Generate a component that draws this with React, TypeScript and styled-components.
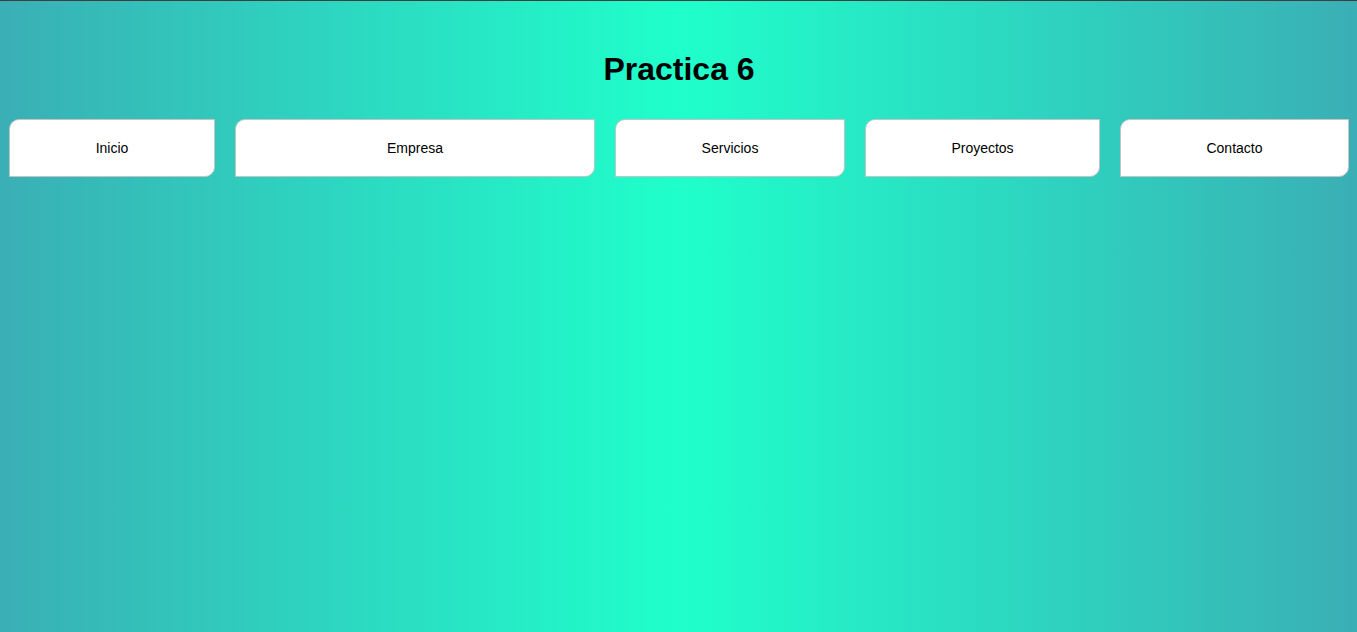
import React from 'react';
import styled, { createGlobalStyle } from 'styled-components';

const GlobalStyle = createGlobalStyle`
  html, body {
    margin: 0;
    padding: 0;
    height: 100%;
  }
  body {
    font-family: "Liberation Sans", Arial, sans-serif;
    border-top: 1px solid #3f3f3f;
    box-sizing: border-box;
    background: linear-gradient(to right, #3aafb5 0%, #1fffcb 50%, #3aafb5 100%);
    min-height: 632px;
  }
`;

const Page = styled.div`
  padding: 0 8px 0 9px;
`;

const Title = styled.h1`
  margin: 50px 0 31px;
  font-size: 32px;
  font-weight: bold;
  text-align: center;
  color: #000;
`;

const Nav = styled.nav`
  display: flex;
  gap: 20px;
`;

const NavButton = styled.a<{ $width: number }>`
  flex: 0 0 ${({ $width }) => $width}px;
  height: 58px;
  box-sizing: border-box;
  display: flex;
  align-items: center;
  justify-content: center;
  background: #fff;
  border: 1px solid #c4c4c4;
  border-radius: 10px 0 10px 0;
  color: #000;
  font-size: 14px;
  text-decoration: none;
  cursor: pointer;
`;

const links = [
  { label: 'Inicio', width: 206 },
  { label: 'Empresa', width: 360 },
  { label: 'Servicios', width: 230 },
  { label: 'Proyectos', width: 235 },
  { label: 'Contacto', width: 229 },
];

export default function App() {
  return (
    <>
      <GlobalStyle />
      <Page>
        <Title>Practica 6</Title>
        <Nav>
          {links.map(l => (
            <NavButton key={l.label} $width={l.width}>{l.label}</NavButton>
          ))}
        </Nav>
      </Page>
    </>
  );
}
